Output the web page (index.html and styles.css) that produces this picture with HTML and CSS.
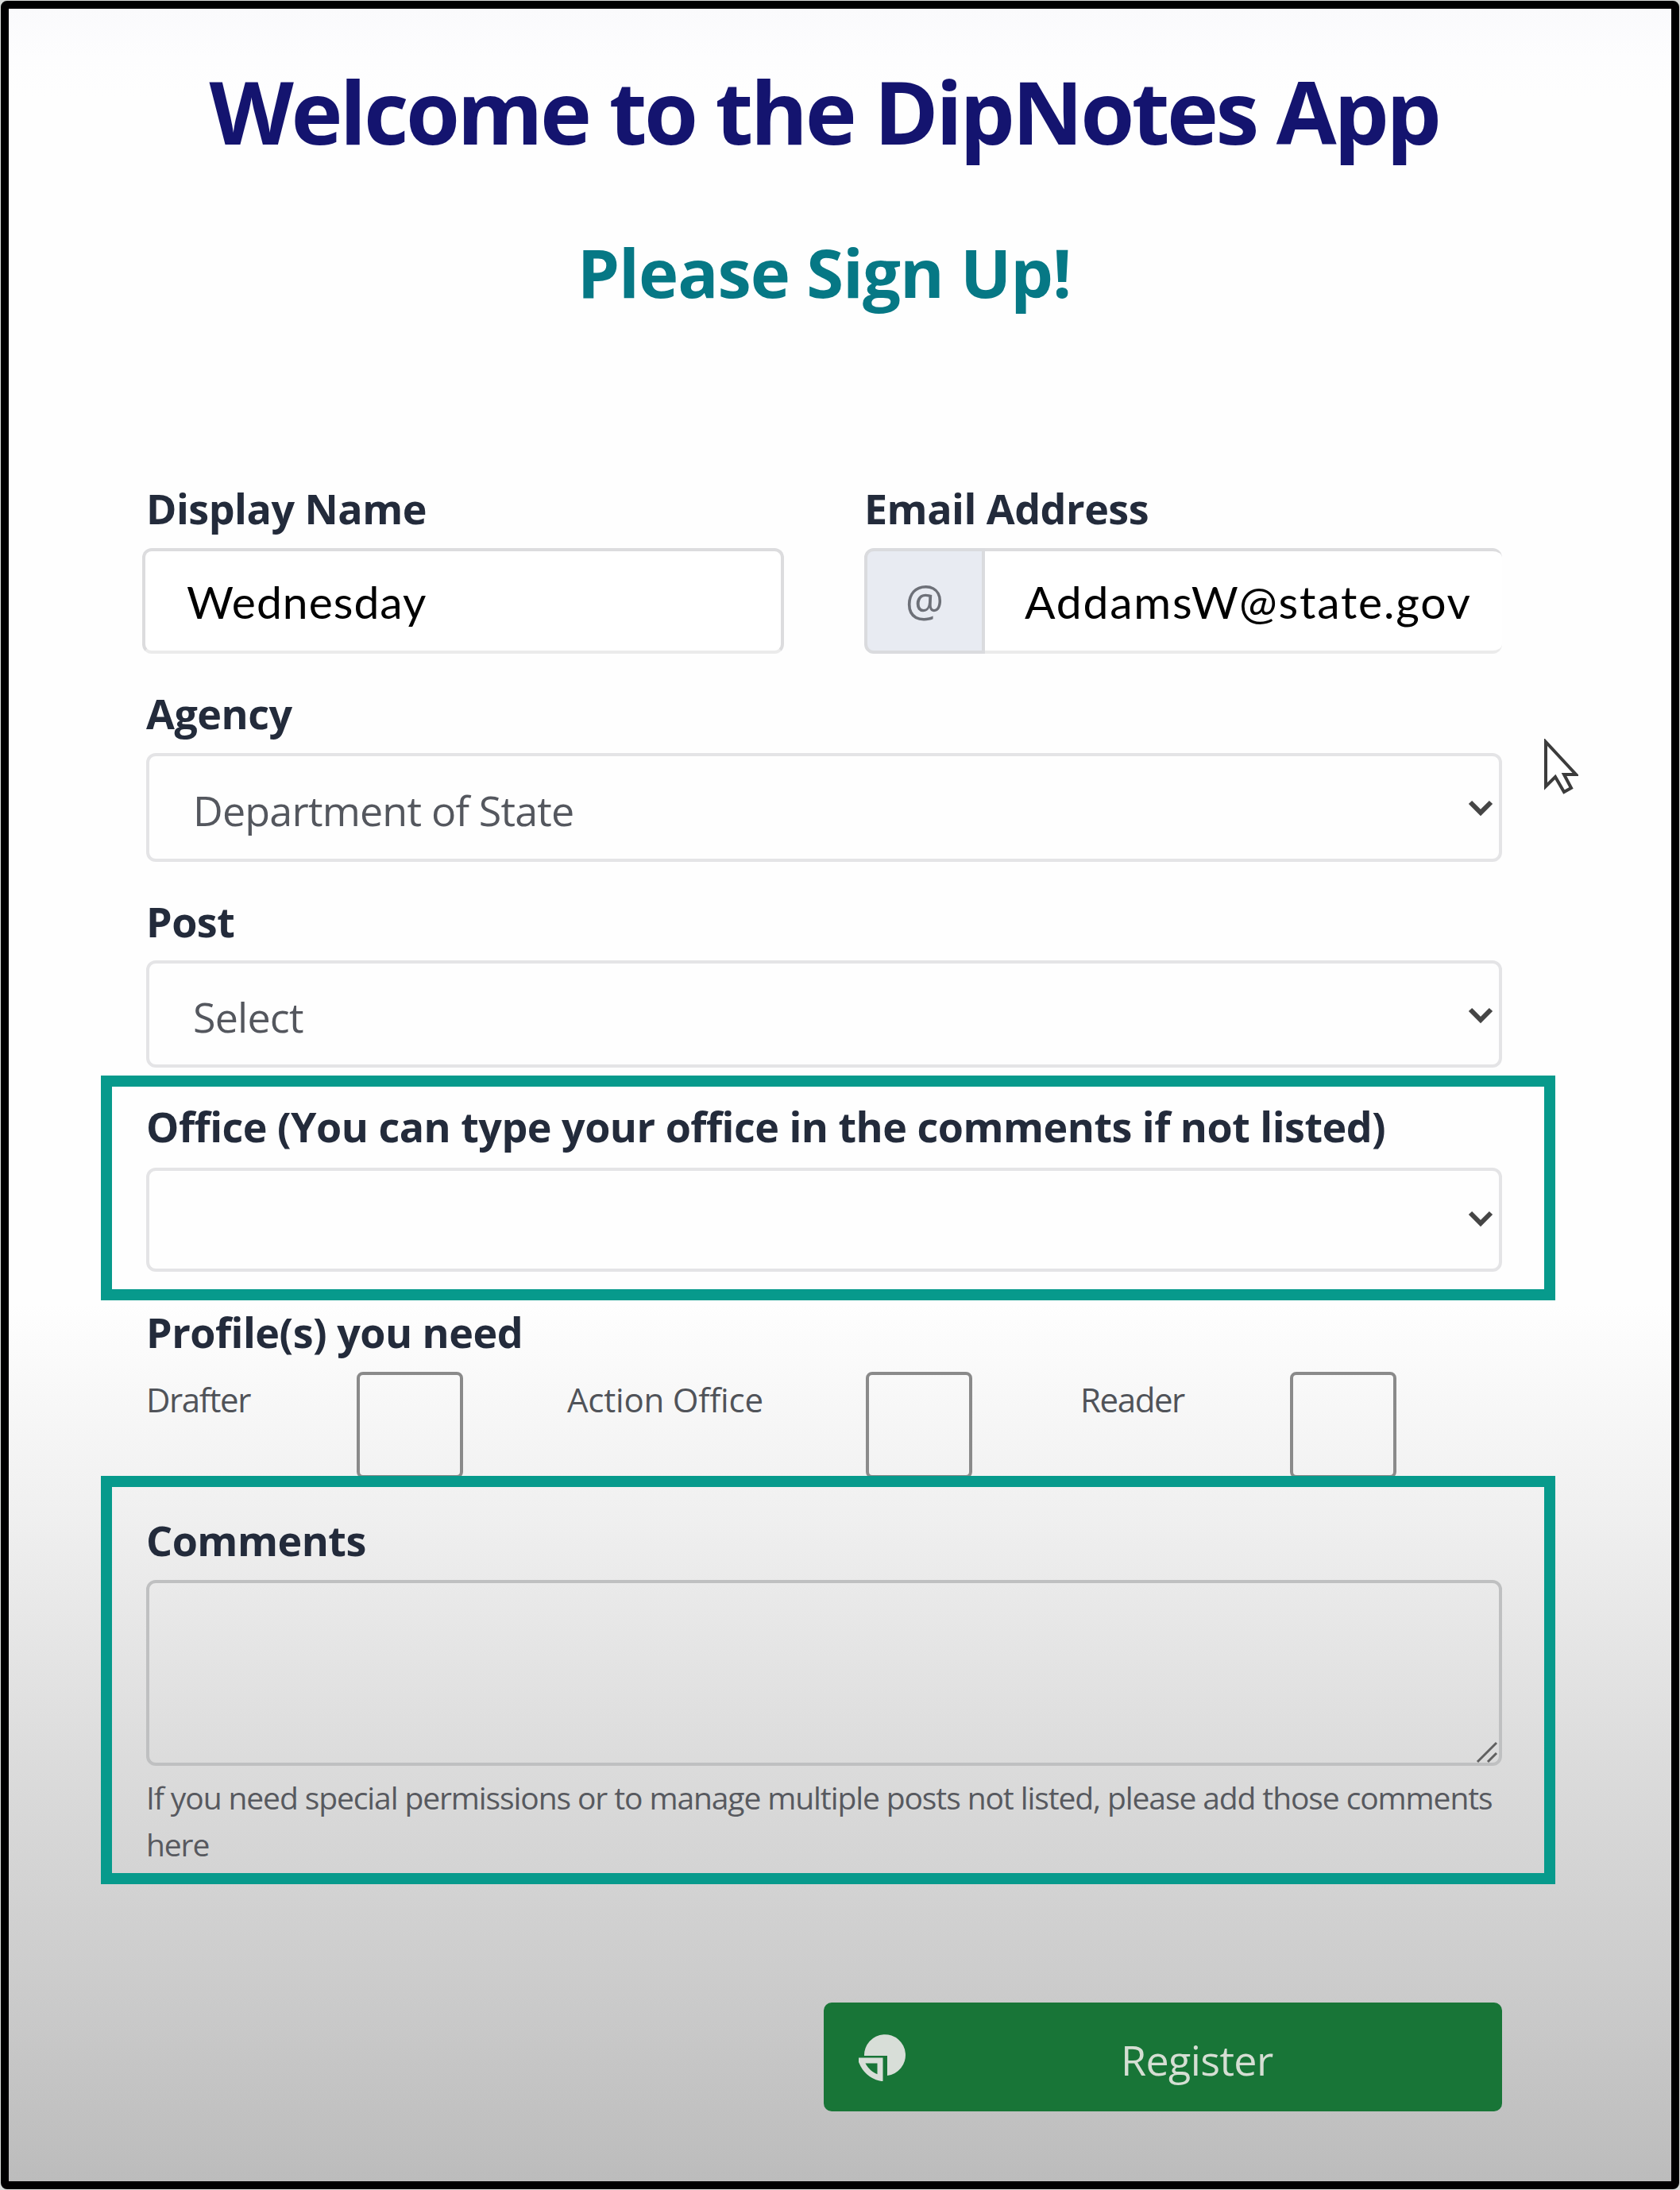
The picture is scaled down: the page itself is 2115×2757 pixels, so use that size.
FILE: index.html
```html
<!DOCTYPE html>
<html lang="en">
<head>
    <meta charset="UTF-8">
    <title>DipNotes App</title>
    <link rel="stylesheet" href="styles.css">
</head>
<body>
<div class="page">
    <div class="content">
        <header>
            <h1>Welcome to the DipNotes App</h1>
            <h2>Please Sign Up!</h2>
        </header>

        <form>
            <div class="row">
                <div class="field">
                    <label for="displayName">Display Name</label>
                    <input id="displayName" class="name" value="Wednesday">
                </div>
                <div class="field">
                    <label for="email">Email Address</label>
                    <div class="input-group">
                        <div class="addon">@</div>
                        <input id="email" class="email" value="AddamsW@state.gov">
                    </div>
                </div>
            </div>

            <div class="field agency">
                <label for="agency">Agency</label>
                <div class="select">
                    <select id="agency">
                        <option>Department of State</option>
                    </select>
                    <svg class="arrow" viewBox="0 0 32 24"><path d="M3 4l13 13L29 4"/></svg>
                </div>
            </div>

            <div class="field post">
                <label for="post">Post</label>
                <div class="select">
                    <select id="post">
                        <option>Select</option>
                    </select>
                    <svg class="arrow" viewBox="0 0 32 24"><path d="M3 4l13 13L29 4"/></svg>
                </div>
            </div>

            <div class="highlight office">
                <label for="office">Office (You can type your office in the comments if not listed)</label>
                <div class="select">
                    <select id="office">
                        <option></option>
                    </select>
                    <svg class="arrow" viewBox="0 0 32 24"><path d="M3 4l13 13L29 4"/></svg>
                </div>
            </div>

            <div class="field profiles">
                <label>Profile(s) you need</label>
                <div class="checks">
                    <span class="check-name">Drafter</span>
                    <input type="checkbox">
                    <span class="check-name wide">Action Office</span>
                    <input type="checkbox">
                    <span class="check-name">Reader</span>
                    <input type="checkbox">
                </div>
            </div>

            <div class="highlight comments">
                <label for="comments">Comments</label>
                <div class="area">
                    <textarea id="comments"></textarea>
                    <svg class="grip" viewBox="0 0 28 28"><path d="M2 26L26 2M15 26L26 15"/></svg>
                </div>
                <p class="help">If you need special permissions or to manage multiple posts not listed, please add those comments<br>here</p>
            </div>

            <button type="button">
                <svg class="icon" viewBox="0 0 60 60">
                    <path class="disc" d="M7 28A26 26 0 1 1 36 53V28Z"/>
                    <path class="slice" d="M3 34H27V56Q10 52 3 34Z"/>
                </svg>
                <span>Register</span>
            </button>
        </form>
    </div>

    <svg class="cursor" viewBox="0 0 44 70">
        <path d="M3 4V60L15 48L26 67L35 62L26 45H41Z"/>
    </svg>
</div>
</body>
</html>
```
FILE: styles.css
```css
* {
    box-sizing: border-box;
}

body {
    margin: 0;
    background: #d9dcda;
    font-family: "Open Sans", "Noto Sans", sans-serif;
}

.page {
    position: relative;
    width: 2113px;
    height: 2755px;
    margin: 1px;
    border: 10px solid #000;
    border-radius: 8px;
    overflow: hidden;
    background: linear-gradient(#fafafc 0, #fdfdfe 60px, #fefefe 110px, #fefefe 1630px, #f5f5f5 1800px, #f0f0f0 1890px, #e7e7e7 2030px, #dcdcdc 2200px, #d3d3d3 2360px, #cbcbcb 2500px, #bcbcbc 2735px);
}

.content {
    width: 1707px;
    margin-left: 173px;
    padding-top: 68px;
}

header {
    text-align: center;
    white-space: nowrap;
}

h1 {
    margin: 0;
    font-size: 110px;
    line-height: 120px;
    letter-spacing: -3.5px;
    color: #14146f;
}

h2 {
    margin: 93px 0 218px;
    font-size: 85px;
    line-height: 100px;
    letter-spacing: -1px;
    color: #067885;
}

.row {
    display: grid;
    grid-template-columns: 803px 803px;
    gap: 101px;
}

label {
    display: block;
    height: 60px;
    font-size: 52px;
    font-weight: bold;
    line-height: 60px;
    letter-spacing: -0.5px;
    color: #232b3b;
    white-space: nowrap;
}

input, select, textarea {
    display: block;
    margin: 0;
    outline: none;
    appearance: none;
    background: transparent;
    border: 4px solid #dcdcde;
    border-radius: 12px;
}

.name, .email {
    height: 133px;
    font-family: Lato, sans-serif;
    font-size: 57px;
    color: #000;
    background: #fff;
    border-bottom-color: #ebebeb;
}

.name {
    width: 808px;
    margin: 20px 0 0 -5px;
    padding: 0 52px;
    letter-spacing: 1px;
}

.input-group {
    display: flex;
    height: 133px;
    margin-top: 20px;
}

.addon {
    width: 152px;
    border: 4px solid #dadbde;
    border-radius: 12px 0 0 12px;
    background: #e8ebf2;
    font-size: 54px;
    line-height: 122px;
    text-align: center;
    color: #6d7078;
}

.email {
    flex: 1;
    min-width: 0;
    padding: 0 0 0 50px;
    border-left: 0;
    border-right: 0;
    border-radius: 0 12px 12px 0;
    letter-spacing: 1.8px;
}

.agency, .post {
    margin-top: 45px;
}

.select {
    position: relative;
    margin-top: 20px;
}

.select select {
    width: 100%;
    height: 137px;
    padding: 6px 60px 0 55px;
    border-color: #e4e4e6;
    font-family: inherit;
    font-size: 52px;
    letter-spacing: -0.8px;
    color: #54575e;
}

.post .select {
    margin-top: 19px;
}

.post select {
    height: 135px;
}

.arrow {
    position: absolute;
    right: 11px;
    top: 58px;
    width: 32px;
    height: 24px;
    fill: none;
    stroke: #454545;
    stroke-width: 6;
}

.office .arrow {
    top: 53px;
}

/* teal frames around the parts to fill in */
.highlight {
    width: 1831px;
    margin-left: -57px;
    border: 14px solid #079a8c;
    padding-left: 43px;
    padding-right: 53px;
}

.office {
    height: 283px;
    margin-top: 10px;
    padding-top: 20px;
}

.office .select {
    margin-top: 22px;
}

.office select {
    height: 131px;
}

.profiles {
    height: 211px;
    margin-top: 10px;
}

.checks {
    display: grid;
    grid-template-columns: 265px 265px 376px 270px 264px 135px;
    height: 132px;
    margin-top: 20px;
}

.checks input {
    width: 134px;
    height: 134px;
    border: 4px solid #8a8a8a;
    border-radius: 8px;
}

.check-name {
    margin-top: 7px;
    font-size: 42px;
    line-height: 56px;
    letter-spacing: -1.4px;
    color: #505359;
    white-space: nowrap;
}

.check-name.wide {
    letter-spacing: -0.2px;
}

.comments {
    position: relative;
    height: 514px;
    padding-top: 37px;
}

.area {
    position: relative;
    margin-top: 20px;
}

textarea {
    width: 100%;
    height: 234px;
    border-color: #bfc0c1;
    resize: none;
}

.grip {
    position: absolute;
    right: 5px;
    bottom: 3px;
    width: 28px;
    height: 28px;
    fill: none;
    stroke: #606060;
    stroke-width: 3;
}

.help {
    margin: 10px 0 0;
    font-size: 39px;
    line-height: 59px;
    letter-spacing: -1.1px;
    color: #57595f;
    white-space: nowrap;
}

button {
    display: flex;
    align-items: center;
    width: 854px;
    height: 137px;
    margin: 149px 0 0 853px;
    padding: 0 0 0 44px;
    border: 0;
    border-radius: 10px;
    background: #187537;
    font-family: inherit;
    font-size: 52px;
    letter-spacing: -0.6px;
    color: #d5ded3;
}

button span {
    margin: 6px 0 0 270px;
}

.icon {
    width: 60px;
    height: 60px;
}

.disc {
    fill: #d8ded8;
}

.slice {
    fill: #187537;
    stroke: #d8ded8;
    stroke-width: 7;
}

.cursor {
    position: absolute;
    left: 1932px;
    top: 919px;
    width: 44px;
    height: 70px;
    fill: #fff;
    stroke: #3c3c3c;
    stroke-width: 4;
}
```
